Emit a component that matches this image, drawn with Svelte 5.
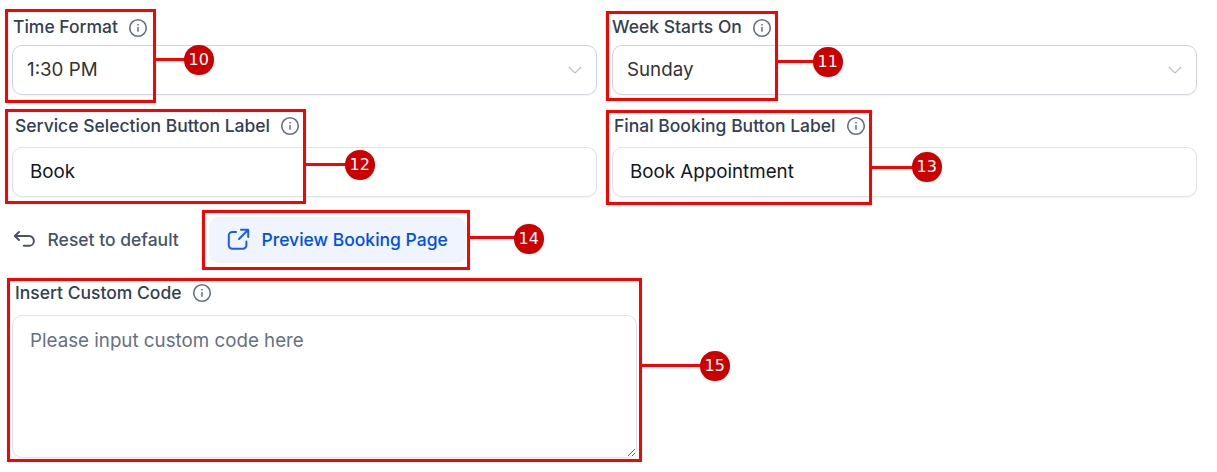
<script>
	const callouts = [
		{ n: 10, x: 5, y: 9, w: 151, h: 94, lineY: 58, badgeX: 184, badgeY: 45 },
		{ n: 11, x: 606, y: 11, w: 172, h: 90, lineY: 60, badgeX: 813, badgeY: 47 },
		{ n: 12, x: 5, y: 109, w: 301, h: 95, lineY: 163, badgeX: 345, badgeY: 150 },
		{ n: 13, x: 606, y: 110, w: 266, h: 95, lineY: 166, badgeX: 912, badgeY: 152 },
		{ n: 14, x: 202, y: 210, w: 268, h: 60, lineY: 236, badgeX: 514, badgeY: 224 },
		{ n: 15, x: 7, y: 278, w: 635, h: 184, lineY: 364, badgeX: 700, badgeY: 351 }
	];

	let serviceLabel = 'Book';
	let bookingLabel = 'Book Appointment';
	let customCode = '';
</script>

{#snippet info()}
	<svg class="info" width="20" height="20" viewBox="0 0 20 20" fill="none" stroke="#667085">
		<circle cx="10" cy="10" r="8.3" stroke-width="1.6" />
		<path d="M10 9v4.8" stroke-width="1.5" />
		<path d="M10 6v1.6" stroke-width="1.6" />
	</svg>
{/snippet}

{#snippet chevron()}
	<svg width="14" height="8" viewBox="0 0 14 8" fill="none" stroke="#bfbfbf" stroke-width="1.2">
		<path d="M.8 1 7 7l6.2-6" />
	</svg>
{/snippet}

<main>
	<div class="grid">
		<div class="field">
			<div class="label first">Time Format {@render info()}</div>
			<div class="control select"><span>1:30 PM</span>{@render chevron()}</div>
		</div>
		<div class="field">
			<div class="label first week">Week Starts On {@render info()}</div>
			<div class="control select"><span>Sunday</span>{@render chevron()}</div>
		</div>
		<div class="field">
			<label class="label second" for="service">Service Selection Button Label {@render info()}</label>
			<input id="service" class="control" bind:value={serviceLabel} />
		</div>
		<div class="field">
			<label class="label second final" for="booking">Final Booking Button Label {@render info()}</label>
			<input id="booking" class="control" bind:value={bookingLabel} />
		</div>
	</div>

	<div class="actions">
		<button class="reset">
			<svg width="24" height="18" viewBox="0 0 24 18" fill="none" stroke="#475467" stroke-width="2" stroke-linecap="round" stroke-linejoin="round">
				<path d="M7 2 2.8 6 7 10M3.1 6H17a4.9 4.9 0 0 1 0 9.8h-5.2" />
			</svg>
			Reset to default
		</button>
		<button class="preview">
			<svg width="24" height="24" viewBox="0 0 24 24" fill="none" stroke="#155eef" stroke-width="2" stroke-linecap="round" stroke-linejoin="round">
				<path d="M10 5H6.4a3.6 3.6 0 0 0-3.6 3.600v9.600a3.600 3.600 0 0 0 3.600 3.600h10.400a3.600 3.600 0 0 0 3.600-3.600V14.500M15 2.800h7.200V10M21.700 3.300 13 12" />
			</svg>
			Preview Booking Page
		</button>
	</div>

	<div class="field code">
		<label class="label" for="code">Insert Custom Code {@render info()}</label>
		<textarea id="code" bind:value={customCode} placeholder="Please input custom code here"></textarea>
	</div>
</main>

{#each callouts as c}
	<div class="box" style="left:{c.x}px;top:{c.y}px;width:{c.w}px;height:{c.h}px"></div>
	<div class="line" style="left:{c.x + c.w}px;top:{c.lineY}px;width:{c.badgeX - c.x - c.w + 2}px"></div>
	<div class="badge" style="left:{c.badgeX}px;top:{c.badgeY}px">{c.n}</div>
{/each}

<style>
	:global(body) {
		background: #fff;
	}
	main {
		box-sizing: border-box;
		width: 1217px;
		height: 472px;
		padding: 12px 20px 0 12px;
		overflow: hidden;
		font-family: Inter, sans-serif;
	}
	.grid {
		display: grid;
		grid-template-columns: 585px 585px;
		column-gap: 15px;
		row-gap: 14px;
	}
	.field {
		display: flex;
		flex-direction: column;
	}
	.label {
		display: flex;
		align-items: center;
		gap: 10px;
		height: 30px;
		margin-bottom: 8px;
		padding-left: 3px;
		font-size: 17.5px;
		font-weight: 500;
		line-height: 30px;
		color: #344054;
		white-space: nowrap;
	}
	.first {
		margin-bottom: 3px;
		padding-left: 1px;
	}
	.week {
		padding-left: 0;
	}
	.second {
		margin-top: 2px;
		margin-bottom: 6px;
	}
	.second .info {
		top: 0;
	}
	.final {
		padding-left: 2px;
	}
	.info {
		flex: none;
		position: relative;
		top: 1px;
	}
	.code .info {
		top: 0;
	}
	.control {
		box-sizing: border-box;
		width: 100%;
		height: 50px;
		margin: 0;
		padding: 0 17px 2px;
		border: 1px solid #e0e2ea;
		border-radius: 10px;
		background: #fff;
		box-shadow: 0 1px 2px rgba(16, 24, 40, 0.05);
		color: #101828;
		font: 400 18.75px Inter, sans-serif;
		outline: none;
	}
	.select {
		display: flex;
		align-items: center;
		justify-content: space-between;
		padding: 0 14px;
		border-color: #d0d5dd;
		color: #333;
	}
	.select span {
		padding-bottom: 2px;
	}
	.actions {
		display: flex;
		align-items: center;
		gap: 30px;
		height: 46px;
		margin-top: 20px;
	}
	button {
		display: flex;
		align-items: center;
		gap: 11.5px;
		padding: 0 0 2px;
		border: 0;
		background: none;
		font: 500 17.5px Inter, sans-serif;
		white-space: nowrap;
	}
	.reset {
		width: 167px;
		color: #475467;
	}
	.preview {
		box-sizing: border-box;
		width: 257px;
		height: 46px;
		padding-left: 17px;
		border-radius: 10px;
		background: #eff4ff;
		color: #004eeb;
	}
	.code {
		width: 625px;
		margin-top: 15px;
	}
	.code .label {
		margin-bottom: 7px;
	}
	textarea {
		box-sizing: border-box;
		width: 625px;
		height: 143px;
		margin: 0;
		padding: 12px 17px;
		border: 1px solid #e0e2ea;
		border-radius: 10px;
		box-shadow: 0 1px 2px rgba(16, 24, 40, 0.05);
		font: 400 18.75px/26px Inter, sans-serif;
		color: #101828;
		outline: none;
	}
	textarea::placeholder {
		color: #667085;
	}
	.box {
		position: absolute;
		box-sizing: border-box;
		border: 3px solid #f00;
		pointer-events: none;
	}
	.line {
		position: absolute;
		height: 3px;
		background: #f00;
	}
	.badge {
		position: absolute;
		width: 29.5px;
		height: 29.5px;
		border-radius: 50%;
		background: #c00;
		color: #fff;
		font: 16px/29px 'DejaVu Sans', sans-serif;
		text-align: center;
	}
</style>
